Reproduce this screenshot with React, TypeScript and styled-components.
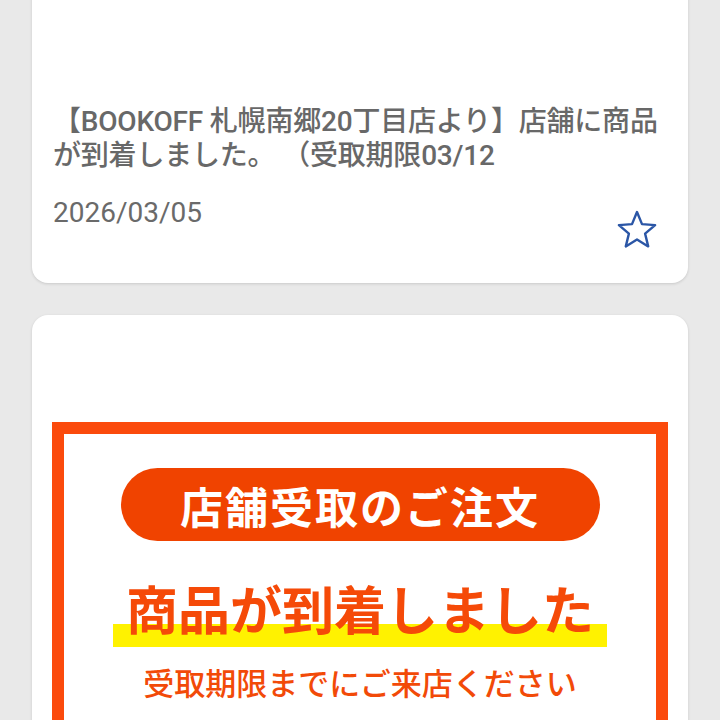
import React from "react";
import styled, { createGlobalStyle } from "styled-components";

const GlobalStyle = createGlobalStyle`
  html, body {
    margin: 0;
    padding: 0;
    background: #e9e9e9;
    overflow: hidden;
  }
  body {
    font-family: Roboto, "Noto Sans CJK JP", sans-serif;
  }
`;

interface NoticeCardType {
  title: string;
  date: string;
  starred?: boolean;
}

const StarIcon: React.FC<{ filled?: boolean }> = ({ filled }) => (
  <svg width="44" height="44" viewBox="0 0 44 44">
    <polygon
      points="22,4 27,16.1 40.1,17.1 30.1,25.6 33.2,38.4 22,31.5 10.8,38.4 13.9,25.6 3.9,17.1 17,16.1"
      fill={filled ? "#2b56a6" : "none"}
      stroke="#2b56a6"
      strokeWidth="2.4"
      strokeLinejoin="round"
    />
  </svg>
);

const NoticeCard: React.FC<NoticeCardType> = ({ title, date, starred }) => {
  return (
    <FirstCard>
      <Thumb />
      <Title>{title}</Title>
      <Footer>
        <DateText>{date}</DateText>
        <StarButton aria-label="favorite">
          <StarIcon filled={starred} />
        </StarButton>
      </Footer>
    </FirstCard>
  );
};

const BannerCard: React.FC = () => {
  return (
    <Card>
      <Banner>
        <Pill>店舗受取のご注文</Pill>
        <Headline>商品が到着しました</Headline>
        <SubLine>受取期限までにご来店ください</SubLine>
      </Banner>
    </Card>
  );
};

export default function App() {
  return (
    <>
      <GlobalStyle />
      <Page>
        <List>
          <NoticeCard
            title="【BOOKOFF 札幌南郷20丁目店より】店舗に商品が到着しました。 （受取期限03/12"
            date="2026/03/05"
          />
          <BannerCard />
        </List>
      </Page>
    </>
  );
}

const Page = styled.div`
  width: 720px;
  height: 720px;
  overflow: hidden;
  padding: 0 32px;
  box-sizing: border-box;
`;

const List = styled.div`
  display: flex;
  flex-direction: column;
  gap: 32px;
  margin-top: -20px;
`;

const Card = styled.div`
  background: #fff;
  border-radius: 16px;
  box-shadow: 0 1px 3px rgba(0, 0, 0, 0.14);
  padding: 20px 20px 0 20px;
`;

const FirstCard = styled(Card)`
  padding: 20px 30px 31px 21px;
`;

const Thumb = styled.div`
  height: 105px;
`;

const Title = styled.p`
  margin: 0 -14px 0 0;
  font-size: 28px;
  line-height: 33.5px;
  font-weight: 500;
  letter-spacing: -0.2px;
  color: #686868;
  font-family: Roboto, "Noto Sans CJK JP", sans-serif;
`;

const Footer = styled.div`
  display: flex;
  justify-content: space-between;
  align-items: flex-start;
  margin-top: 24px;
`;

const DateText = styled.span`
  font-size: 28px;
  line-height: 34px;
  font-weight: 400;
  color: #6a6a6a;
`;

const StarButton = styled.span`
  display: flex;
  margin-top: 12px;
  margin-right: -1px;
`;

const Banner = styled.div`
  margin-top: 87px;
  border: 12px solid #fb4a0c;
  border-bottom: none;
  height: 400px;
  display: flex;
  flex-direction: column;
  align-items: center;
  font-family: "Noto Sans CJK JP", sans-serif;
`;

const Pill = styled.div`
  margin-top: 34px;
  width: 479px;
  height: 73px;
  border-radius: 37px;
  background: #f04300;
  color: #fff;
  font-size: 43px;
  font-weight: 700;
  letter-spacing: 2px;
  display: flex;
  align-items: center;
  justify-content: center;
`;

const Headline = styled.div`
  margin-top: 34px;
  padding: 0 13px 6px;
  font-size: 52px;
  line-height: 66px;
  font-weight: 700;
  color: #f54a08;
  background: linear-gradient(transparent 68%, #fff200 68%);
`;

const SubLine = styled.div`
  margin-top: 15px;
  font-size: 31px;
  line-height: 40px;
  font-weight: 500;
  color: #f24a08;
`;
